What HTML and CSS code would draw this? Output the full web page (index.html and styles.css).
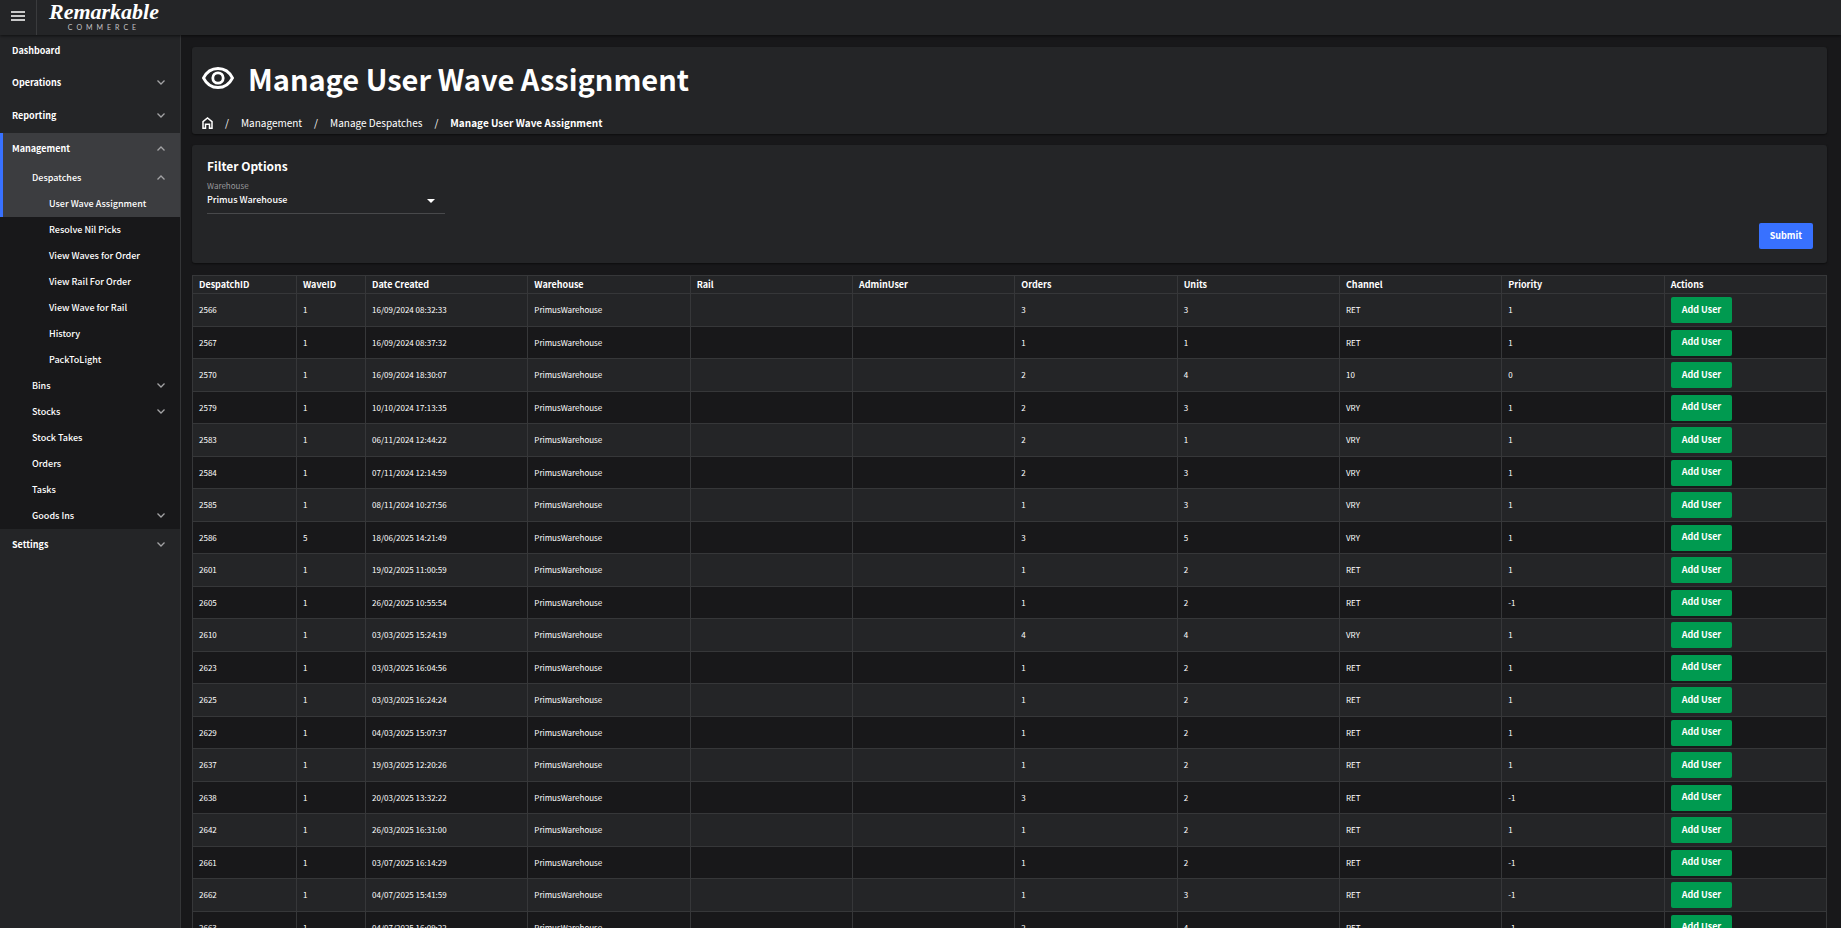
FILE: index.html
```html
<!DOCTYPE html>
<html lang="en">
<head>
  <meta charset="UTF-8" />
  <title>Manage User Wave Assignment</title>
  <link rel="stylesheet" href="styles.css">
</head>
<body>
  <header class="topbar">
    <button type="button" class="menu-btn" aria-label="Toggle menu">
      <svg width="14" height="10" viewBox="0 0 14 10"><path d="M0 1h14M0 5h14M0 9h14" stroke="#fff" stroke-width="1.4" /></svg>
    </button>
    <a href="#" class="logo">
      <span class="logo-name">Remarkable</span>
      <span class="logo-sub">COMMERCE</span>
    </a>
  </header>

  <div class="layout">
    <nav class="sidebar">
      <a href="#" class="nav-link">Dashboard</a>
      <a href="#" class="nav-link closed">Operations <svg class="chevron" viewBox="0 0 8 5"><path d="M.5.5 4 4 7.500.5" /></svg></a>
      <a href="#" class="nav-link closed">Reporting <svg class="chevron" viewBox="0 0 8 5"><path d="M.5.5 4 4 7.500.5" /></svg></a>
      <div class="nav-open">
        <a href="#" class="nav-link">Management <svg class="chevron" viewBox="0 0 8 5"><path d="M.5 4.500 4 1 7.500 4.500" /></svg></a>
        <a href="#" class="sub-link">Despatches <svg class="chevron" viewBox="0 0 8 5"><path d="M.5 4.500 4 1 7.500 4.500" /></svg></a>
        <a href="#" class="sub-link deep">User Wave Assignment</a>
      </div>
      <div class="nav-rest">
        <a href="#" class="sub-link deep">Resolve Nil Picks</a>
        <a href="#" class="sub-link deep">View Waves for Order</a>
        <a href="#" class="sub-link deep">View Rail For Order</a>
        <a href="#" class="sub-link deep">View Wave for Rail</a>
        <a href="#" class="sub-link deep">History</a>
        <a href="#" class="sub-link deep">PackToLight</a>
        <a href="#" class="sub-link">Bins <svg class="chevron" viewBox="0 0 8 5"><path d="M.5.5 4 4 7.500.5" /></svg></a>
        <a href="#" class="sub-link">Stocks <svg class="chevron" viewBox="0 0 8 5"><path d="M.5.5 4 4 7.500.5" /></svg></a>
        <a href="#" class="sub-link">Stock Takes</a>
        <a href="#" class="sub-link">Orders</a>
        <a href="#" class="sub-link">Tasks</a>
        <a href="#" class="sub-link">Goods Ins <svg class="chevron" viewBox="0 0 8 5"><path d="M.5.5 4 4 7.500.5" /></svg></a>
      </div>
      <a href="#" class="nav-link closed">Settings <svg class="chevron" viewBox="0 0 8 5"><path d="M.5.5 4 4 7.500.5" /></svg></a>
    </nav>

    <main class="content">
      <section class="card page-head">
        <div class="title-row">
          <svg class="eye" viewBox="0 0 32 22" fill="none" stroke="#fff" stroke-width="2.800">
            <path d="M1.500 11C4.500 5 9.500 1.500 16 1.500S27.500 5 30.500 11C27.500 17 22.500 20.500 16 20.500S4.500 17 1.500 11z" />
            <circle cx="16" cy="11" r="5.200" />
          </svg>
          <h1>Manage User Wave Assignment</h1>
        </div>
        <nav class="breadcrumb" aria-label="Breadcrumb">
          <a href="#" aria-label="Home">
            <svg class="home" viewBox="0 0 11 12" fill="none" stroke="#fff" stroke-width="1.500"><path d="M1 11.200V4.600L5.500 1 10 4.600V11.200H7.500V7.200H3.500V11.200z" /></svg>
          </a>
          <span>/</span>
          <a href="#">Management</a>
          <span>/</span>
          <a href="#">Manage Despatches</a>
          <span>/</span>
          <a href="#" class="current">Manage User Wave Assignment</a>
        </nav>
      </section>

      <form class="card filter" id="filterForm">
        <h2>Filter Options</h2>
        <label for="warehouse">Warehouse</label>
        <div class="select-wrapper">
          <select id="warehouse" name="warehouse">
            <option selected>Primus Warehouse</option>
          </select>
        </div>
        <button type="submit" class="btn btn-submit">Submit</button>
      </form>

      <table class="waves">
        <colgroup>
          <col class="col-id">
          <col class="col-wave">
          <col span="9">
        </colgroup>
        <thead>
          <tr>
            <th>DespatchID</th>
            <th>WaveID</th>
            <th>Date Created</th>
            <th>Warehouse</th>
            <th>Rail</th>
            <th>AdminUser</th>
            <th>Orders</th>
            <th>Units</th>
            <th>Channel</th>
            <th>Priority</th>
            <th>Actions</th>
          </tr>
        </thead>
        <tbody id="waveRows"></tbody>
      </table>
    </main>
  </div>

  <script src="script.js"></script>
</body>
</html>
```

FILE: styles.css
```css
* {
  box-sizing: border-box;
}

body {
  margin: 0;
  height: 100vh;
  overflow: hidden;
  display: flex;
  flex-direction: column;
  background-color: #18181a;
  color: #fff;
  font-family: "Noto Sans CJK JP", "Noto Sans", sans-serif;
  font-size: 9px;
}

a {
  color: inherit;
  text-decoration: none;
}

/* top bar */
.topbar {
  position: relative;
  display: flex;
  flex: none;
  height: 35px;
  background-color: #242527;
  box-shadow: 0 1px 3px rgba(0, 0, 0, 0.6);
}

.menu-btn {
  width: 37px;
  padding: 0 0 4px;
  border: none;
  border-right: 1px solid #3a3b3d;
  background: none;
  cursor: pointer;
}

.menu-btn svg {
  vertical-align: middle;
}

.logo {
  display: flex;
  flex-direction: column;
  align-items: center;
  margin-left: 12px;
}

.logo-name {
  font: italic bold 22px/23px "Liberation Serif", serif;
}

.logo-sub {
  font: 7px/8px Lato, sans-serif;
  letter-spacing: 4px;
  color: #c4c4c6;
}

/* sidebar */
.layout {
  display: flex;
  flex: 1;
  min-height: 0;
}

.sidebar {
  flex: none;
  width: 181px;
  border-right: 1px solid #343537;
  background-color: #242527;
}

.nav-link,
.sub-link {
  display: flex;
  align-items: center;
  justify-content: space-between;
  height: 32px;
  padding: 0 15px 2px 12px;
  font-weight: bold;
}

.nav-link.closed {
  height: 33px;
}

.sub-link {
  height: 26px;
  padding-left: 32px;
  font-weight: 500;
}

.sub-link.deep {
  padding-left: 49px;
}

.nav-open {
  background-color: #3c3d40;
  box-shadow: inset 3px 0 #3871ff;
}

.nav-rest {
  background-color: #18181a;
}

.chevron {
  width: 8px;
  height: 5px;
  fill: none;
  stroke: #a3a3a5;
  stroke-width: 1.3;
  overflow: visible;
}

/* cards */
.content {
  flex: 1;
  min-width: 0;
  padding: 12px 14px 0 11px;
}

.card {
  margin-bottom: 11px;
  border-radius: 3px;
  background-color: #242527;
  box-shadow: 0 1px 2px rgba(0, 0, 0, 0.5);
}

.page-head {
  padding: 11px 10px 3px;
}

.title-row {
  display: flex;
  align-items: center;
  gap: 14px;
}

.eye {
  width: 32px;
  height: 22px;
}

h1 {
  margin: 0;
  font-size: 29px;
  line-height: 40px;
  font-weight: bold;
}

.breadcrumb {
  display: flex;
  align-items: center;
  gap: 12px;
  margin-top: 17px;
  font-size: 10px;
  line-height: 16px;
}

.home {
  display: block;
  width: 11px;
  height: 12px;
}

.current {
  font-weight: bold;
}

.filter {
  display: flex;
  flex-direction: column;
  align-items: flex-start;
  margin-bottom: 12px;
  padding: 11px 14px 14px 15px;
}

h2 {
  margin: 0;
  font-size: 12px;
  line-height: 20px;
}

.filter label {
  margin-top: 5px;
  font-size: 8px;
  line-height: 10px;
  color: #98989b;
}

.select-wrapper {
  position: relative;
  width: 238px;
  border-bottom: 1px solid #48494b;
}

.select-wrapper::after {
  content: "";
  position: absolute;
  top: 8px;
  right: 10px;
  border: 4px solid transparent;
  border-top-color: #fff;
  border-bottom: none;
  pointer-events: none;
}

select {
  display: block;
  width: 100%;
  height: 22px;
  padding: 0 0 5px;
  border: none;
  appearance: none;
  background: none;
  color: #fff;
  font: 500 9px/16px "Noto Sans CJK JP", sans-serif;
}

.btn {
  height: 26px;
  padding: 0 11px 1px;
  border: none;
  border-radius: 2px;
  background-color: #009a50;
  color: #fff;
  font: bold 9px/16px "Noto Sans CJK JP", sans-serif;
  cursor: pointer;
}

.btn-submit {
  align-self: flex-end;
  margin-top: 9px;
  background-color: #3871ff;
}

/* table */
.waves {
  width: 100%;
  table-layout: fixed;
  border-collapse: collapse;
}

.col-id {
  width: 104px;
}

.col-wave {
  width: 69px;
}

.waves th,
.waves td {
  padding: 0 6px;
  border: 1px solid #363739;
  text-align: left;
}

.waves th {
  height: 18px;
  padding-bottom: 1px;
  font-size: 9px;
  line-height: 15px;
  background-color: #242527;
}

.waves td {
  height: 32px;
  font-size: 8px;
  line-height: 16px;
}

.waves tr:nth-child(odd) td {
  height: 33px;
  background-color: #242527;
}

.waves .btn {
  display: block;
}
```

FILE: script.js
```js
const rows = [
  [2566, 1, "16/09/2024 08:32:33", 3, 3, "RET", 1],
  [2567, 1, "16/09/2024 08:37:32", 1, 1, "RET", 1],
  [2570, 1, "16/09/2024 18:30:07", 2, 4, "10", 0],
  [2579, 1, "10/10/2024 17:13:35", 2, 3, "VRY", 1],
  [2583, 1, "06/11/2024 12:44:22", 2, 1, "VRY", 1],
  [2584, 1, "07/11/2024 12:14:59", 2, 3, "VRY", 1],
  [2585, 1, "08/11/2024 10:27:56", 1, 3, "VRY", 1],
  [2586, 5, "18/06/2025 14:21:49", 3, 5, "VRY", 1],
  [2601, 1, "19/02/2025 11:00:59", 1, 2, "RET", 1],
  [2605, 1, "26/02/2025 10:55:54", 1, 2, "RET", -1],
  [2610, 1, "03/03/2025 15:24:19", 4, 4, "VRY", 1],
  [2623, 1, "03/03/2025 16:04:56", 1, 2, "RET", 1],
  [2625, 1, "03/03/2025 16:24:24", 1, 2, "RET", 1],
  [2629, 1, "04/03/2025 15:07:37", 1, 2, "RET", 1],
  [2637, 1, "19/03/2025 12:20:26", 1, 2, "RET", 1],
  [2638, 1, "20/03/2025 13:32:22", 3, 2, "RET", -1],
  [2642, 1, "26/03/2025 16:31:00", 1, 2, "RET", 1],
  [2661, 1, "03/07/2025 16:14:29", 1, 2, "RET", -1],
  [2662, 1, "04/07/2025 15:41:59", 1, 3, "RET", -1],
  [2663, 1, "04/07/2025 16:09:22", 2, 4, "RET", -1]
];

const tbody = document.getElementById("waveRows");

rows.forEach(([id, wave, created, orders, units, channel, priority]) => {
  const tr = document.createElement("tr");
  const cells = [id, wave, created, "PrimusWarehouse", "", "", orders, units, channel, priority];

  cells.forEach(value => {
    const td = document.createElement("td");
    td.textContent = value;
    tr.appendChild(td);
  });

  const actions = document.createElement("td");
  actions.innerHTML = '<button type="button" class="btn">Add User</button>';
  tr.appendChild(actions);
  tbody.appendChild(tr);
});
```
